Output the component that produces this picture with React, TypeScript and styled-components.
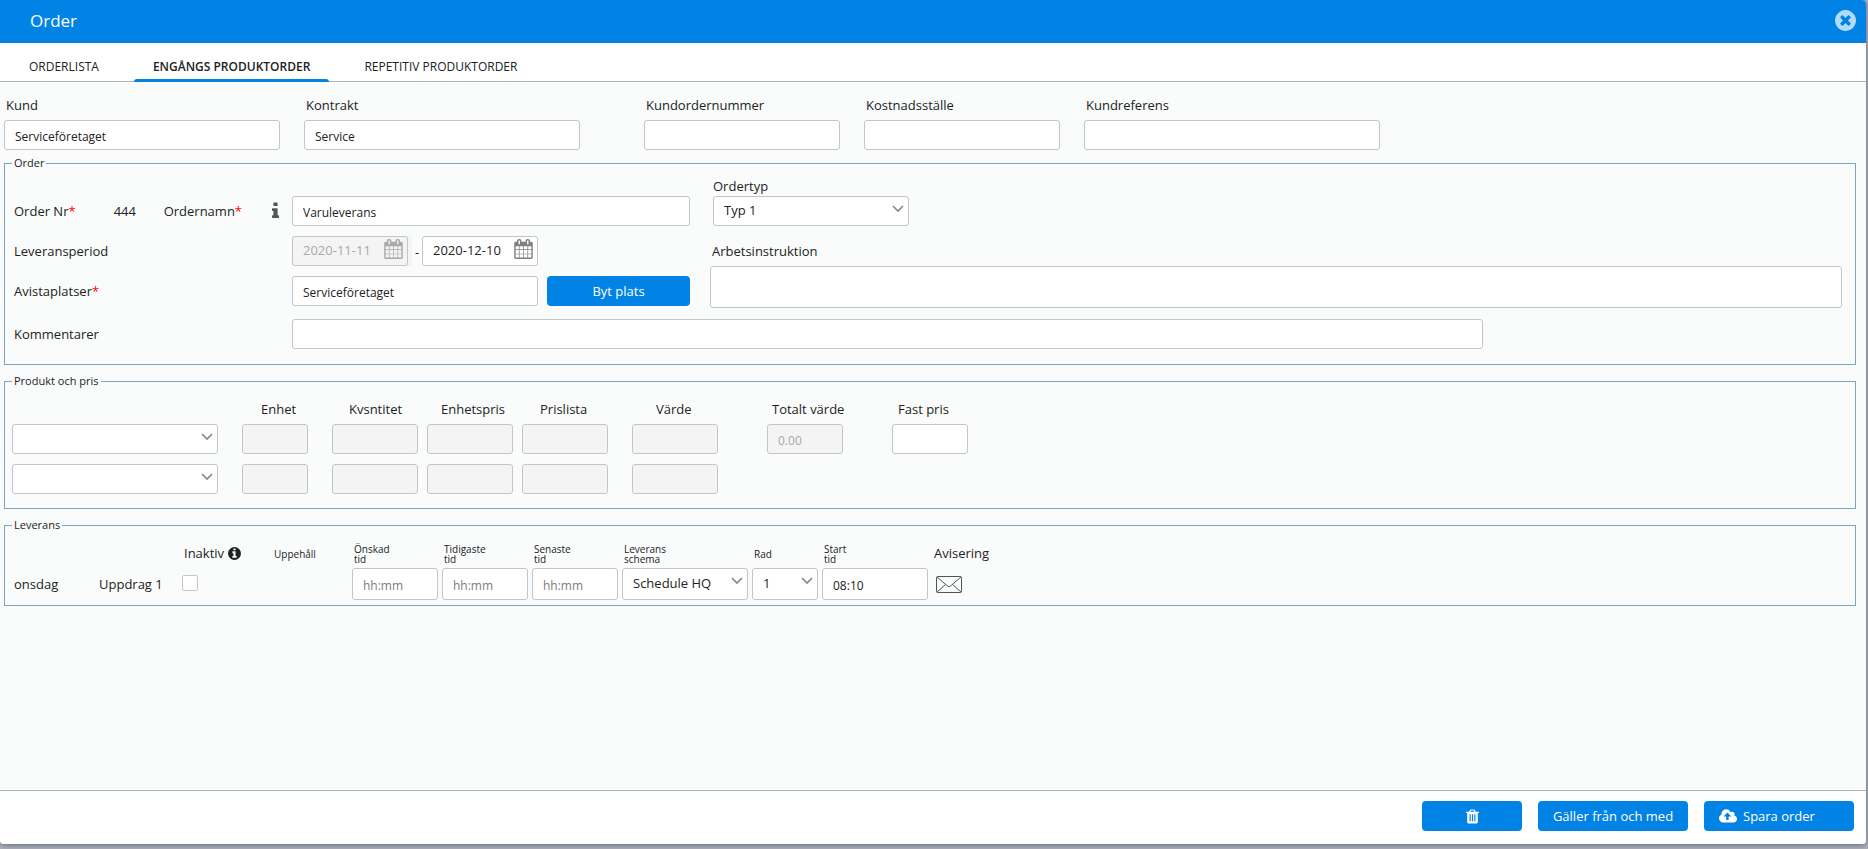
import React, { useId } from "react";
import styled, { createGlobalStyle, css } from "styled-components";

const GlobalStyle = createGlobalStyle`
  *, *::before, *::after { box-sizing: border-box; }
  body {
    margin: 0;
    background: #b1b3bb;
    color: #222;
    font-family: "Open Sans", "Noto Sans", sans-serif;
    font-size: 13px;
    line-height: 20px;
  }
  button, input, select, textarea { font-family: inherit; color: inherit; margin: 0; }
`;

const BLUE = "#0083e5";
const BORDER = "#c3c5ca";
const GROUP = "#82a3c0";

/* ---------- shell ---------- */

const Backdrop = styled.div`
  display: flex;
  min-height: 100vh;
  padding: 0 2px 5px 0;
`;

const Dialog = styled.section`
  display: flex;
  flex-direction: column;
  flex: 1;
  min-width: 0;
  background: #fafcfc;
  border-radius: 0 4px 4px 4px;
  overflow: hidden;
  box-shadow: 0 1px 6px rgba(60, 70, 100, 0.7);
`;

const TitleBar = styled.header`
  display: flex;
  align-items: center;
  justify-content: space-between;
  height: 43px;
  padding: 0 10px 2px 30px;
  background: ${BLUE};
  color: #fff;
`;

const Title = styled.h1`
  margin: 0;
  font-size: 17px;
  font-weight: 400;
  line-height: 24px;
`;

const CloseButton = styled.button`
  display: flex;
  padding: 0;
  border: 0;
  background: none;
  color: #b3dafa;
  cursor: pointer;
`;

const Tabs = styled.nav`
  display: flex;
  gap: 16px;
  height: 39px;
  padding: 0 10px;
  background: #fff;
  border-bottom: 1px solid #aab6c4;
`;

const Tab = styled.a<{ $active?: boolean }>`
  position: relative;
  display: flex;
  align-items: center;
  height: 39px;
  padding: 8px 19px 0;
  color: #222;
  font-size: 12px;
  font-weight: ${(p) => (p.$active ? 600 : 400)};
  line-height: 16px;
  text-decoration: none;
  ${(p) =>
    p.$active &&
    css`
      &::after {
        content: "";
        position: absolute;
        inset: auto 0 0 0;
        height: 3px;
        border-radius: 3px 3px 0 0;
        background: ${BLUE};
      }
    `}
`;

const Body = styled.form`
  flex: 1;
  padding: 13px 10px 13px 4px;
`;

const Footer = styled.footer`
  display: flex;
  justify-content: flex-end;
  gap: 16px;
  padding: 10px 12px 13px;
  background: #fff;
  border-top: 1px solid #aab6c4;
`;

/* ---------- controls ---------- */

const boxed = css`
  height: 30px;
  border: 1px solid ${BORDER};
  border-radius: 3px;
  background: #fff;
  font-size: 12px;
  line-height: 16px;
  outline: 0;
`;

const TextInput = styled.input<{ $tall?: boolean }>`
  ${boxed}
  display: block;
  width: 100%;
  min-width: 0;
  height: ${(p) => (p.$tall ? 32 : 30)}px;
  padding: 3px 10px 0;
  &::placeholder { color: #7d7d7d; opacity: 1; }
  &:disabled { background: #f4f4f4; color: #a9a9a9; }
`;

const TextArea = styled.textarea`
  ${boxed}
  display: block;
  width: 100%;
  height: 42px;
  padding: 4px 10px;
  resize: none;
`;

const SelectWrap = styled.span`
  position: relative;
  display: block;
  width: 100%;
  svg {
    position: absolute;
    top: 9px;
    right: 5px;
    pointer-events: none;
  }
`;

const NativeSelect = styled.select<{ $tall?: boolean }>`
  ${boxed}
  display: block;
  width: 100%;
  height: ${(p) => (p.$tall ? 32 : 30)}px;
  padding: 0 20px 3px 10px;
  appearance: none;
  font-size: 13px;
`;

const DateWrap = styled.span<{ $muted?: boolean }>`
  position: relative;
  display: block;
  width: ${(p) => (p.$muted ? 120 : 116)}px;
  padding-right: ${(p) => (p.$muted ? 4 : 0)}px;
  background: ${(p) => (p.$muted ? "#f4f4f4" : "none")};
`;

const DateInput = styled(TextInput)`
  padding: 0 30px 2px 10px;
  font-size: 13px;
`;

const DateButton = styled.button<{ $muted?: boolean }>`
  position: absolute;
  top: 3px;
  right: ${(p) => (p.$muted ? 9 : 5)}px;
  display: flex;
  padding: 0;
  border: 0;
  background: none;
  color: #808080;
  &:disabled { color: #a9a9a9; }
`;

const PrimaryButton = styled.button<{ $width: number; $start?: boolean }>`
  display: flex;
  flex-shrink: 0;
  align-items: center;
  justify-content: ${(p) => (p.$start ? "flex-start" : "center")};
  gap: 6px;
  width: ${(p) => p.$width}px;
  height: 30px;
  padding: 0 15px;
  border: 0;
  border-radius: 4px;
  background: ${BLUE};
  color: #fff;
  font-size: 13px;
  line-height: 20px;
  white-space: nowrap;
  cursor: pointer;
`;

/* ---------- form layout ---------- */

const CustomerRow = styled.div`
  display: flex;
  gap: 24px;
  margin-bottom: 5px;
`;

const Field = styled.div<{ $width: number; $after?: number }>`
  width: ${(p) => p.$width}px;
  margin-right: ${(p) => p.$after ?? 0}px;
`;

const FieldLabel = styled.label`
  display: block;
  padding: 0 2px 5px;
`;

const Group = styled.fieldset<{ $pad: string }>`
  min-width: 0;
  margin: 0;
  padding: ${(p) => p.$pad};
  border: 1px solid ${GROUP};
  & + & { margin-top: 8px; }
`;

const Legend = styled.legend<{ $indent?: number }>`
  margin-left: ${(p) => p.$indent ?? 0}px;
  padding: 0 2px;
  font-size: 11px;
  line-height: 16px;
`;

const OrderGrid = styled.div`
  display: grid;
  grid-template-columns: 278px 398px minmax(0, 1fr);
`;

const Rows = styled.div`
  display: flex;
  flex-direction: column;
  gap: 10px;
`;

const Line = styled.div`
  display: flex;
  align-items: center;
  height: 30px;
`;

const OrderNumber = styled.output`
  width: 50px;
  margin-left: 38px;
`;

const InfoMark = styled.span`
  display: flex;
  margin-left: auto;
  padding-right: 13px;
  color: #555;
`;

const Dash = styled.span`
  width: 10px;
  height: 30px;
  padding-top: 6px;
  text-align: center;
`;

const PlaceLine = styled(Line)`
  gap: 9px;
`;

const SideColumn = styled.div`
  padding: 0 13px 0 20px;
`;

const TypeBlock = styled.div`
  width: 199px;
  height: 50px;
  margin-top: -20px;
  padding-left: 3px;
`;

const WorkLabel = styled.label`
  display: block;
  padding: 15px 2px 5px;
`;

const CommentRow = styled.div`
  display: grid;
  grid-template-columns: 278px minmax(0, 1191px) minmax(0, 362px);
  align-items: center;
  padding-top: 11px;
`;

const Star = styled.span`
  color: #f00;
`;

/* ---------- product table ---------- */

const ProductTable = styled.table`
  border-spacing: 0;
  table-layout: fixed;
  width: 958px;
  th {
    padding: 0 0 5px;
    font-weight: 400;
    text-align: left;
    white-space: nowrap;
  }
  td { padding: 0 0 10px; }
`;

const Head = styled.span<{ $inset: number }>`
  display: block;
  padding-left: ${(p) => p.$inset}px;
`;

/* ---------- delivery table ---------- */

const DeliveryTable = styled.table`
  border-spacing: 0;
  table-layout: fixed;
  width: 990px;
  th {
    height: 27px;
    padding: 0 0 3px;
    font-weight: 400;
    text-align: left;
    vertical-align: middle;
    white-space: nowrap;
  }
  td { padding: 0; }
`;

const SmallHead = styled.span`
  display: block;
  padding: 2px 0 0 2px;
  font-size: 10px;
  line-height: 10px;
`;

const IconHead = styled.span`
  display: flex;
  align-items: center;
  gap: 4px;
  padding-left: 2px;
`;

const Gap = styled.div<{ $right: number }>`
  padding-right: ${(p) => p.$right}px;
`;

const CheckBox = styled.input`
  display: block;
  width: 16px;
  height: 16px;
  margin-bottom: 3px;
  appearance: none;
  border: 1px solid ${BORDER};
  border-radius: 2px;
  background: #fff;
`;

const MailButton = styled.button`
  display: flex;
  padding: 0;
  margin-left: 4px;
  border: 0;
  background: none;
`;

/* ---------- icons ---------- */

const Glyph = ({ w, d, size }: { w: number; d: string; size: number }) => (
  <svg
    width={Math.round((w / 1792) * size)}
    height={size}
    viewBox={`0 0 ${w} 1792`}
    fill="currentColor"
    fillRule="evenodd"
    aria-hidden="true"
  >
    <path d={d} />
  </svg>
);

const CIRCLE =
  "M1536 896q0 209-103 385.5T1153.5 1561 768 1664t-385.5-103T103 1281.5 0 896t103-385.5T382.5 231 768 128t385.5 103T1433 510.5 1536 896z";
const TIMES_CIRCLE =
  "M1149 1122q0-26-19-45L949 896l181-181q19-19 19-45 0-27-19-46l-90-90q-19-19-46-19-26 0-45 19L768 715 587 534q-19-19-45-19-27 0-46 19l-90 90q-19 19-19 46 0 26 19 45l181 181-181 181q-19 19-19 45 0 27 19 46l90 90q19 19 46 19 26 0 45-19l181-181 181 181q19 19 45 19 27 0 46-19l90-90q19-19 19-46z" +
  CIRCLE;
const INFO_CIRCLE =
  "M1024 1376v-160q0-14-9-23t-23-9h-96V672q0-14-9-23t-23-9H544q-14 0-23 9t-9 23v160q0 14 9 23t23 9h96v320h-96q-14 0-23 9t-9 23v160q0 14 9 23t23 9h448q14 0 23-9t9-23zM896 480V320q0-14-9-23t-23-9H672q-14 0-23 9t-9 23v160q0 14 9 23t23 9h192q14 0 23-9t9-23z" +
  CIRCLE;
const INFO =
  "M640 1344v128q0 26-19 45t-45 19H64q-26 0-45-19t-19-45v-128q0-26 19-45t45-19h64V896H64q-26 0-45-19t-19-45V704q0-26 19-45t45-19h384q26 0 45 19t19 45v576h64q26 0 45 19t19 45zM512 192v192q0 26-19 45t-45 19H192q-26 0-45-19t-19-45V192q0-26 19-45t45-19h256q26 0 45 19t19 45z";
const CALENDAR =
  "M128 1664h288v-288H128v288zm352 0h320v-288H480v288zm-352-352h288V992H128v320zm352 0h320V992H480v320zM128 928h288V640H128v288zm736 736h320v-288H864v288zM480 928h320V640H480v288zm768 736h288v-288h-288v288zm-384-352h320V992H864v320zM512 448V160q0-13-9.5-22.5T480 128h-64q-13 0-22.5 9.5T384 160v288q0 13 9.5 22.5T416 480h64q13 0 22.5-9.5T512 448zm736 864h288V992h-288v320zM864 928h320V640H864v288zm384 0h288V640h-288v288zm32-480V160q0-13-9.5-22.5T1248 128h-64q-13 0-22.5 9.5T1152 160v288q0 13 9.5 22.5t22.5 9.5h64q13 0 22.5-9.5t9.5-22.5zm384-64v1280q0 52-38 90t-90 38H128q-52 0-90-38t-38-90V384q0-52 38-90t90-38h128v-96q0-66 47-113T416 0h64q66 0 113 47t47 113v96h384v-96q0-66 47-113t113-47h64q66 0 113 47t47 113v96h128q52 0 90 38t38 90z";
const TRASH =
  "M512 1376V672q0-14-9-23t-23-9h-64q-14 0-23 9t-9 23v704q0 14 9 23t23 9h64q14 0 23-9t9-23zm256 0V672q0-14-9-23t-23-9h-64q-14 0-23 9t-9 23v704q0 14 9 23t23 9h64q14 0 23-9t9-23zm256 0V672q0-14-9-23t-23-9h-64q-14 0-23 9t-9 23v704q0 14 9 23t23 9h64q14 0 23-9t9-23zM480 384h448l-48-117q-7-9-17-11H546q-10 2-17 11zm928 32v64q0 14-9 23t-23 9h-96v948q0 83-47 143.5t-113 60.5H288q-66 0-113-58.5T128 1464V512H32q-14 0-23-9t-9-23v-64q0-14 9-23t23-9h309l70-167q15-37 54-63t79-26h320q40 0 79 26t54 63l70 167h309q14 0 23 9t9 23z";
const CLOUD_UPLOAD =
  "M1280 864q0-14-9-23L919 489q-9-9-23-9t-23 9L522 840q-10 12-10 24 0 14 9 23t23 9h224v352q0 13 9.5 22.5t22.5 9.5h192q13 0 22.5-9.5t9.5-22.5V896h224q13 0 22.5-9.5t9.5-22.5zm640 288q0 159-112.5 271.5t-271.5 112.5h-1088q-185 0-316.5-131.5t-131.5-316.5q0-130 70-240t188-165q-2-30-2-43 0-212 150-362t362-150q156 0 285.5 87t188.5 231q71-62 166-62 106 0 181 75t75 181q0 76-41 138 130 31 213.5 135.5t83.5 238.5z";

const Chevron = () => (
  <svg width="12" height="8" viewBox="0 0 12 8" fill="none" stroke="#858585" strokeWidth="1.6" aria-hidden="true">
    <path d="M1 1l5 5 5-5" />
  </svg>
);

const Envelope = () => (
  <svg width="26" height="17" viewBox="0 0 26 17" fill="none" stroke="#555" strokeWidth="1" aria-hidden="true">
    <rect x="0.5" y="0.5" width="25" height="16" rx="1" />
    <path d="M1 1l10.500 9q1.500 1.400 3 0L25 1M1 16l8.500-7.500M25 16l-8.500-7.500" />
  </svg>
);

/* ---------- composed parts ---------- */

const Select = ({ id, options, tall, label }: { id?: string; options: string[]; tall?: boolean; label?: string }) => (
  <SelectWrap>
    <NativeSelect id={id} $tall={tall} aria-label={label}>
      {options.map((o) => (
        <option key={o}>{o}</option>
      ))}
    </NativeSelect>
    <Chevron />
  </SelectWrap>
);

const DateField = ({ value, disabled, label, id }: { value: string; disabled?: boolean; label: string; id?: string }) => (
  <DateWrap $muted={disabled}>
    <DateInput id={id} defaultValue={value} disabled={disabled} aria-label={label} />
    <DateButton type="button" disabled={disabled} $muted={disabled} aria-label={`Välj ${label}`}>
      <Glyph w={1664} d={CALENDAR} size={20} />
    </DateButton>
  </DateWrap>
);

const LabeledInput = ({ label, width, after, value }: { label: string; width: number; after?: number; value?: string }) => {
  const id = useId();
  return (
    <Field $width={width} $after={after}>
      <FieldLabel htmlFor={id}>{label}</FieldLabel>
      <TextInput id={id} defaultValue={value} />
    </Field>
  );
};

const PRODUCT_COLUMNS = [
  { name: "", width: 230, gap: 24, inset: 0 },
  { name: "Enhet", width: 90, gap: 24, inset: 19 },
  { name: "Kvsntitet", width: 95, gap: 9, inset: 17 },
  { name: "Enhetspris", width: 95, gap: 9, inset: 14 },
  { name: "Prislista", width: 110, gap: 24, inset: 18 },
  { name: "Värde", width: 135, gap: 49, inset: 24 },
  { name: "Totalt värde", width: 125, gap: 49, inset: 5 },
  { name: "Fast pris", width: 78, gap: 2, inset: 6 },
];

const Products = () => (
  <ProductTable>
    <colgroup>
      {PRODUCT_COLUMNS.map((c) => (
        <col key={c.name} width={c.width} />
      ))}
    </colgroup>
    <thead>
      <tr>
        {PRODUCT_COLUMNS.map((c) => (
          <th key={c.name} scope="col">
            <Head $inset={c.inset}>{c.name}</Head>
          </th>
        ))}
      </tr>
    </thead>
    <tbody>
      {[1, 2].map((row) => (
        <tr key={row}>
          {PRODUCT_COLUMNS.map((c, i) => (
            <td key={c.name}>
              <Gap $right={c.gap}>
                {i === 0 && <Select options={[""]} label={`Produkt ${row}`} />}
                {i > 0 && i < 6 && <TextInput disabled aria-label={`${c.name} ${row}`} />}
                {i === 6 && row === 1 && <TextInput disabled defaultValue="0.00" aria-label={c.name} />}
                {i === 7 && row === 1 && <TextInput aria-label={c.name} />}
              </Gap>
            </td>
          ))}
        </tr>
      ))}
    </tbody>
  </ProductTable>
);

const DELIVERY_WIDTHS = [85, 83, 90, 80, 90, 90, 90, 130, 70, 110, 72];

const Delivery = () => (
  <DeliveryTable>
    <colgroup>
      {DELIVERY_WIDTHS.map((w, i) => (
        <col key={i} width={w} />
      ))}
    </colgroup>
    <thead>
      <tr>
        <th />
        <th />
        <th scope="col">
          <IconHead>
            Inaktiv <Glyph w={1536} d={INFO_CIRCLE} size={15} />
          </IconHead>
        </th>
        <th scope="col"><SmallHead>Uppehåll</SmallHead></th>
        <th scope="col"><SmallHead>Önskad<br />tid</SmallHead></th>
        <th scope="col"><SmallHead>Tidigaste<br />tid</SmallHead></th>
        <th scope="col"><SmallHead>Senaste<br />tid</SmallHead></th>
        <th scope="col"><SmallHead>Leverans<br />schema</SmallHead></th>
        <th scope="col"><SmallHead>Rad</SmallHead></th>
        <th scope="col"><SmallHead>Start<br />tid</SmallHead></th>
        <th scope="col"><IconHead>Avisering</IconHead></th>
      </tr>
    </thead>
    <tbody>
      <tr>
        <td>onsdag</td>
        <td>Uppdrag 1</td>
        <td><CheckBox type="checkbox" aria-label="Inaktiv" /></td>
        <td />
        <td><Gap $right={4}><TextInput $tall placeholder="hh:mm" aria-label="Önskad tid" /></Gap></td>
        <td><Gap $right={4}><TextInput $tall placeholder="hh:mm" aria-label="Tidigaste tid" /></Gap></td>
        <td><Gap $right={4}><TextInput $tall placeholder="hh:mm" aria-label="Senaste tid" /></Gap></td>
        <td><Gap $right={4}><Select tall options={["Schedule HQ"]} label="Leveransschema" /></Gap></td>
        <td><Gap $right={4}><Select tall options={["1"]} label="Rad" /></Gap></td>
        <td><Gap $right={4}><TextInput $tall defaultValue="08:10" aria-label="Starttid" /></Gap></td>
        <td><MailButton type="button" aria-label="Avisering"><Envelope /></MailButton></td>
      </tr>
    </tbody>
  </DeliveryTable>
);

export default function App() {
  return (
    <>
      <GlobalStyle />
      <Backdrop>
        <Dialog>
          <TitleBar>
            <Title>Order</Title>
            <CloseButton type="button" aria-label="Stäng">
              <Glyph w={1536} d={TIMES_CIRCLE} size={25} />
            </CloseButton>
          </TitleBar>
          <Tabs>
            <Tab href="#lista">ORDERLISTA</Tab>
            <Tab href="#engangs" $active>ENGÅNGS PRODUKTORDER</Tab>
            <Tab href="#repetitiv">REPETITIV PRODUKTORDER</Tab>
          </Tabs>
          <Body id="order">
            <CustomerRow>
              <LabeledInput label="Kund" width={276} value="Serviceföretaget" />
              <LabeledInput label="Kontrakt" width={276} after={40} value="Service" />
              <LabeledInput label="Kundordernummer" width={196} />
              <LabeledInput label="Kostnadsställe" width={196} />
              <LabeledInput label="Kundreferens" width={296} />
            </CustomerRow>

            <Group $pad="25px 0 15px 9px">
              <Legend $indent={-2}>Order</Legend>
              <OrderGrid>
                <Rows>
                  <Line>
                    <span>Order Nr<Star>*</Star></span>
                    <OrderNumber>444</OrderNumber>
                    <label htmlFor="name">Ordernamn<Star>*</Star></label>
                    <InfoMark><Glyph w={640} d={INFO} size={20} /></InfoMark>
                  </Line>
                  <Line><label htmlFor="from">Leveransperiod</label></Line>
                  <Line><label htmlFor="place">Avistaplatser<Star>*</Star></label></Line>
                </Rows>
                <Rows>
                  <Line><TextInput id="name" defaultValue="Varuleverans" /></Line>
                  <Line>
                    <DateField id="from" value="2020-11-11" disabled label="startdatum" />
                    <Dash>-</Dash>
                    <DateField value="2020-12-10" label="slutdatum" />
                  </Line>
                  <PlaceLine>
                    <TextInput id="place" defaultValue="Serviceföretaget" />
                    <PrimaryButton type="button" $width={143}>Byt plats</PrimaryButton>
                  </PlaceLine>
                </Rows>
                <SideColumn>
                  <TypeBlock>
                    <label htmlFor="type">Ordertyp</label>
                    <Select id="type" options={["Typ 1"]} />
                  </TypeBlock>
                  <WorkLabel htmlFor="work">Arbetsinstruktion</WorkLabel>
                  <TextArea id="work" />
                </SideColumn>
              </OrderGrid>
              <CommentRow>
                <label htmlFor="comment">Kommentarer</label>
                <TextInput id="comment" />
              </CommentRow>
            </Group>

            <Group $pad="10px 0 4px 7px">
              <Legend>Produkt och pris</Legend>
              <Products />
            </Group>

            <Group $pad="8px 0 5px 9px">
              <Legend $indent={-2}>Leverans</Legend>
              <Delivery />
            </Group>
          </Body>
          <Footer>
            <PrimaryButton type="button" $width={100} aria-label="Ta bort">
              <Glyph w={1408} d={TRASH} size={17} />
            </PrimaryButton>
            <PrimaryButton type="button" $width={150}>Gäller från och med</PrimaryButton>
            <PrimaryButton type="submit" form="order" $width={150} $start>
              <Glyph w={1920} d={CLOUD_UPLOAD} size={17} />
              Spara order
            </PrimaryButton>
          </Footer>
        </Dialog>
      </Backdrop>
    </>
  );
}
